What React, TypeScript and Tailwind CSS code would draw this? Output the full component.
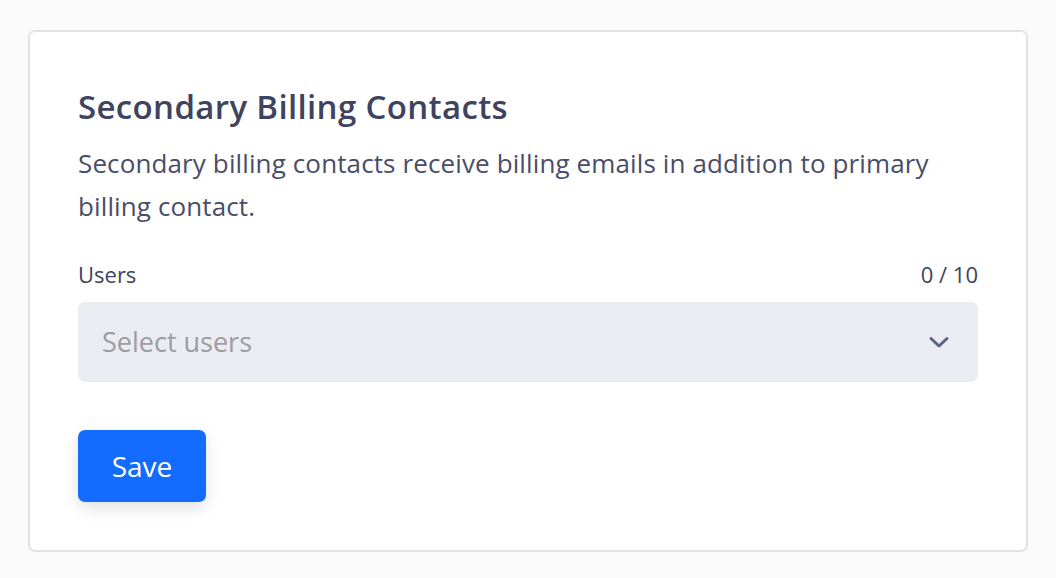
import React from "react";

export default function App() {
  return (
    <div
      className="min-h-[578px] w-full bg-[#fafafa] pl-[28px] pt-[30px]"
      style={{ fontFamily: "'Open Sans', Lato, sans-serif" }}
    >
      <div className="w-[1000px] h-[522px] rounded-[7px] border-2 border-[#e2e2e4] bg-white px-[48px] pt-[57px]">
        <h2 className="text-[33px] leading-[36px] font-semibold tracking-[0.35px] text-[#3e4360]">
          Secondary Billing Contacts
        </h2>
        <p className="mt-[17px] text-[26px] leading-[43px] tracking-[0.12px] text-[#494d68]">
          Secondary billing contacts receive billing emails in addition to primary billing contact.
        </p>
        <div className="mt-[32px] flex items-center justify-between text-[22px] leading-[28px] text-[#3e4360]">
          <span>Users</span>
          <span>0 / 10</span>
        </div>
        <div className="mt-[14px] flex h-[80px] items-center justify-between rounded-[7px] bg-[#ebecf1] pl-[24px] pr-[28px]">
          <span className="text-[27px] text-[#9c9ca2]">Select users</span>
          <svg width="22" height="14" viewBox="0 0 22 14" fill="none">
            <path d="M3 3.5 L11 11 L19 3.5" stroke="#5d6187" strokeWidth="3" strokeLinecap="round" strokeLinejoin="round" />
          </svg>
        </div>
        <button className="mt-[48px] flex h-[72px] w-[128px] items-center justify-center rounded-[7px] bg-[#146bff] text-[28px] text-white shadow-[0_6px_16px_rgba(0,0,0,0.12)]">
          Save
        </button>
      </div>
    </div>
  );
}
